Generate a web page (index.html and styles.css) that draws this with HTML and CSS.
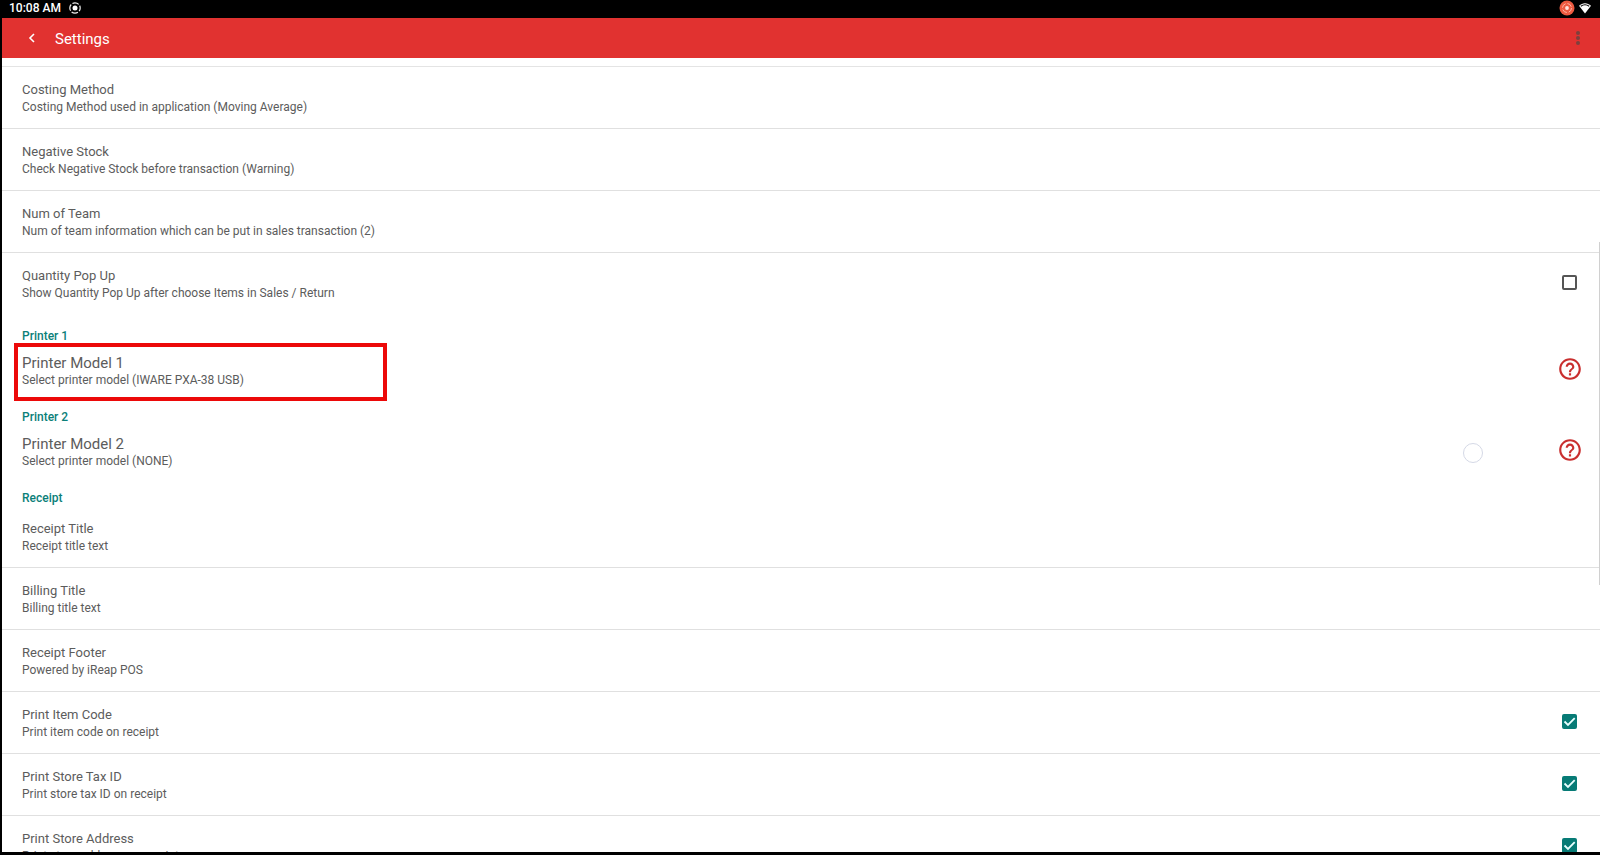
FILE: index.html
```html
<!DOCTYPE html>
<html lang="en">
<head>
<meta charset="utf-8">
<meta name="viewport" content="width=device-width, initial-scale=1">
<title>Settings</title>
<link rel="stylesheet" href="styles.css">
</head>
<body>
<svg class="sprite" aria-hidden="true">
  <symbol id="help" viewBox="0 0 24 24">
    <path d="M11 18h2v-2h-2v2zm1-16C6.48 2 2 6.48 2 12s4.48 10 10 10 10-4.480 10-10S17.520 2 12 2zm0 18c-4.410 0-8-3.590-8-8s3.590-8 8-8 8 3.590 8 8-3.590 8-8 8zm0-14c-2.210 0-4 1.790-4 4h2c0-1.100.9-2 2-2s2 .9 2 2c0 2-3 1.750-3 5h2c0-2.250 3-2.500 3-5 0-2.210-1.790-4-4-4z" fill="currentColor"/>
  </symbol>
  <symbol id="tick" viewBox="0 0 15 15">
    <path d="M2.500 7.500l3.500 3.500 6.700-6.900" fill="none" stroke="currentColor" stroke-width="1.800"/>
  </symbol>
</svg>

<div class="status">
  <span class="clock">10:08 AM</span>
  <svg class="status-icon" viewBox="0 0 12 12" aria-hidden="true">
    <circle cx="6" cy="6" r="5.200" fill="none" stroke="#eee" stroke-width="1.200" stroke-dasharray="6.670 1.500" stroke-dashoffset="3.300"/>
    <circle cx="6" cy="6" r="2.500" fill="#fff"/>
  </svg>
  <svg class="cast-icon" viewBox="0 0 16 16" aria-hidden="true">
    <circle cx="8" cy="8" r="7.500" fill="#ee5a40"/>
    <circle cx="8" cy="8" r="4.500" fill="none" stroke="#ffb5a5" stroke-width="1" stroke-dasharray="5.070 2"/>
    <circle cx="8" cy="8" r="1.900" fill="#ffe4de"/>
  </svg>
  <svg class="status-icon" viewBox="0 0 12 12" aria-hidden="true">
    <path d="M6 11.500L0 3.800C1.800 2.100 3.800 1.200 6 1.200s4.200.9 6 2.600z" fill="#fff"/>
    <path d="M1.800 4.300Q6 1.200 10.200 4.300" fill="none" stroke="#000" stroke-width="1.100"/>
  </svg>
</div>

<header class="toolbar">
  <button class="icon-button" aria-label="Back">
    <svg class="back" viewBox="0 0 12 12" aria-hidden="true"><path d="M8 2L4 6l4 4" fill="none" stroke="#fff" stroke-width="1.600"/></svg>
  </button>
  <h1 class="title">Settings</h1>
  <button class="icon-button" aria-label="More options">
    <svg class="more" viewBox="0 0 4 14" aria-hidden="true"><g fill="#7d403d"><circle cx="2" cy="2" r="2"/><circle cx="2" cy="7" r="2"/><circle cx="2" cy="12" r="2"/></g></svg>
  </button>
</header>

<main class="list">
  <section class="group group-first">
    <button class="row"><span class="name">Costing Method</span><span class="note">Costing Method used in application (Moving Average)</span></button>
    <button class="row"><span class="name">Negative Stock</span><span class="note">Check Negative Stock before transaction (Warning)</span></button>
    <button class="row"><span class="name">Num of Team</span><span class="note">Num of team information which can be put in sales transaction (2)</span></button>
    <label class="row"><span class="name">Quantity Pop Up</span><span class="note">Show Quantity Pop Up after choose Items in Sales / Return</span><span class="control"><input class="box" type="checkbox"><svg class="tick" aria-hidden="true"><use href="#tick"/></svg></span></label>
  </section>

  <section class="group">
    <h2 class="heading">Printer 1</h2>
    <div class="printer">
      <button class="pick"><span class="name large">Printer Model 1</span><span class="note">Select printer model (IWARE PXA-38 USB)</span></button>
      <button class="help" aria-label="Help for printer 1"><svg class="help-icon" aria-hidden="true"><use href="#help"/></svg></button>
      <span class="highlight"></span>
    </div>
  </section>

  <section class="group">
    <h2 class="heading">Printer 2</h2>
    <div class="printer">
      <button class="pick"><span class="name large">Printer Model 2</span><span class="note">Select printer model (NONE)</span></button>
      <button class="help" aria-label="Help for printer 2"><svg class="help-icon" aria-hidden="true"><use href="#help"/></svg></button>
      <span class="touch"></span>
    </div>
  </section>

  <section class="group">
    <h2 class="heading">Receipt</h2>
    <button class="row"><span class="name">Receipt Title</span><span class="note">Receipt title text</span></button>
    <button class="row"><span class="name">Billing Title</span><span class="note">Billing title text</span></button>
    <button class="row"><span class="name">Receipt Footer</span><span class="note">Powered by iReap POS</span></button>
    <label class="row"><span class="name">Print Item Code</span><span class="note">Print item code on receipt</span><span class="control"><input class="box" type="checkbox" checked><svg class="tick" aria-hidden="true"><use href="#tick"/></svg></span></label>
    <label class="row"><span class="name">Print Store Tax ID</span><span class="note">Print store tax ID on receipt</span><span class="control"><input class="box" type="checkbox" checked><svg class="tick" aria-hidden="true"><use href="#tick"/></svg></span></label>
    <label class="row"><span class="name">Print Store Address</span><span class="note">Print store address on receipt</span><span class="control"><input class="box" type="checkbox" checked><svg class="tick" aria-hidden="true"><use href="#tick"/></svg></span></label>
  </section>
  <span class="scrollbar"></span>
</main>
</body>
</html>
```
FILE: styles.css
```css
* {
  box-sizing: border-box;
}

body {
  display: flex;
  flex-direction: column;
  height: 100vh;
  margin: 0;
  padding: 0 0 3px 2px;
  overflow: hidden;
  background: #000;
  color: #5c5c5c;
  font-family: Roboto, "Noto Sans", sans-serif;
}

button {
  margin: 0;
  padding: 0;
  border: 0;
  background: none;
  color: inherit;
  font: inherit;
  text-align: left;
}

.sprite {
  display: none;
}

.status {
  display: flex;
  flex: none;
  align-items: center;
  gap: 4px;
  padding: 0 9px 2px 7px;
  color: #fff;
}

.clock {
  margin-right: 4px;
  font-size: 12px;
  font-weight: 500;
  line-height: 16px;
}

.status-icon {
  width: 12px;
  height: 12px;
}

.cast-icon {
  width: 16px;
  height: 16px;
  margin-left: auto;
}

.toolbar {
  display: flex;
  flex: none;
  align-items: center;
  padding: 0 12px;
  background: #e13230;
  color: #fff;
}

.icon-button {
  display: grid;
  place-items: center;
  width: 20px;
  height: 40px;
}

.toolbar .icon-button:first-child {
  width: 36px;
}

.back {
  width: 12px;
  height: 12px;
}

.more {
  width: 4px;
  height: 14px;
}

.title {
  flex: 1;
  margin: 0;
  padding: 2px 0 0 5px;
  font-size: 15px;
  font-weight: 400;
  line-height: 20px;
}

.list {
  position: relative;
  flex: 1;
  min-height: 0;
  overflow: hidden;
  background: #fff;
}

.group-first {
  margin-top: 8px;
  border-top: 1px solid #e4e4e4;
}

.row {
  display: grid;
  grid-template-columns: 1fr 21px;
  width: 100%;
  padding: 14px 20px 13px;
  border-bottom: 1px solid #e0e0e0;
}

.row:last-child {
  border-bottom: 0;
}

.name,
.note {
  display: block;
  grid-column: 1;
}

.name {
  font-size: 13px;
  line-height: 18px;
}

.large {
  font-size: 15px;
}

.note {
  font-size: 12px;
  line-height: 16px;
}

.control {
  display: grid;
  grid-area: 1 / 2 / 3 / 3;
  place-content: center;
  padding-bottom: 3px;
}

.box,
.tick {
  grid-area: 1 / 1;
  width: 15px;
  height: 15px;
  margin: 0;
}

.box {
  appearance: none;
  border: 2px solid #555;
  border-radius: 2px;
}

.box:checked {
  border-color: #077b76;
  background: #077b76;
}

.tick {
  visibility: hidden;
  color: #e8ffff;
  pointer-events: none;
}

.box:checked + .tick {
  visibility: visible;
}

.heading {
  margin: 0;
  padding: 14px 20px 0;
  color: #0b8079;
  font-size: 12px;
  font-weight: 500;
  line-height: 16px;
}

.printer {
  position: relative;
  display: flex;
  align-items: center;
  padding-right: 19px;
}

.pick {
  flex: 1;
  padding: 10px 20px 7px;
}

.help {
  padding-bottom: 1px;
  color: #c92f2f;
}

.help-icon {
  display: block;
  width: 26px;
  height: 26px;
  margin: -2px;
}

.highlight {
  position: absolute;
  top: -1px;
  left: 12px;
  width: 373px;
  height: 58px;
  border: 4px solid #ec0909;
  pointer-events: none;
}

.touch {
  position: absolute;
  top: 18px;
  right: 117px;
  width: 20px;
  height: 20px;
  border: 1px solid #d5d9e6;
  border-radius: 50%;
  pointer-events: none;
}

.scrollbar {
  position: absolute;
  top: 184px;
  right: 0;
  width: 1px;
  height: 343px;
  background: #d0d0d0;
}
```
